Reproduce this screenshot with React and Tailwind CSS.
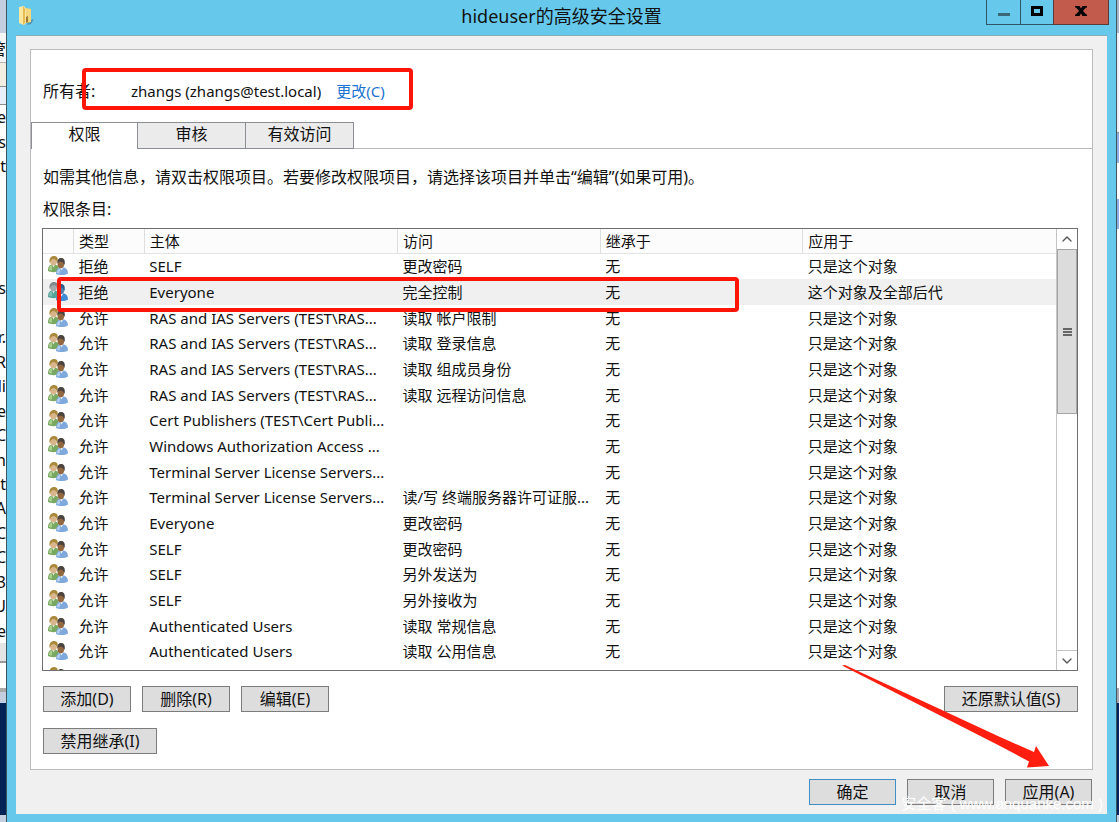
import { useState } from "react"
import clsx from "clsx"
import { ChevronDown, ChevronUp } from "lucide-react"

const tabs = ["权限", "审核", "有效访问"]

const entries = [
  { type: "拒绝", principal: "SELF", access: "更改密码" },
  { type: "拒绝", principal: "Everyone", access: "完全控制", scope: "这个对象及全部后代" },
  { type: "允许", principal: "RAS and IAS Servers (TEST\\RAS...", access: "读取 帐户限制" },
  { type: "允许", principal: "RAS and IAS Servers (TEST\\RAS...", access: "读取 登录信息" },
  { type: "允许", principal: "RAS and IAS Servers (TEST\\RAS...", access: "读取 组成员身份" },
  { type: "允许", principal: "RAS and IAS Servers (TEST\\RAS...", access: "读取 远程访问信息" },
  { type: "允许", principal: "Cert Publishers (TEST\\Cert Publi...", access: "" },
  { type: "允许", principal: "Windows Authorization Access ...", access: "" },
  { type: "允许", principal: "Terminal Server License Servers...", access: "" },
  { type: "允许", principal: "Terminal Server License Servers...", access: "读/写 终端服务器许可证服..." },
  { type: "允许", principal: "Everyone", access: "更改密码" },
  { type: "允许", principal: "SELF", access: "更改密码" },
  { type: "允许", principal: "SELF", access: "另外发送为" },
  { type: "允许", principal: "SELF", access: "另外接收为" },
  { type: "允许", principal: "Authenticated Users", access: "读取 常规信息" },
  { type: "允许", principal: "Authenticated Users", access: "读取 公用信息" },
  { type: "允许", principal: "Authenticated Users", access: "读取 个人信息" },
]

// what shows of the windows behind, one line each
const behindLines = ["e", "as", "t", "", "", "", "", "s", "", "r.", "R", "li", "e", "C", "in", "at", "A", "C", "C", "3", "U", "e"]

function FolderIcon() {
  return (
    <svg className="h-5 w-4" viewBox="0 0 16 20" aria-hidden="true">
      <path d="M9 15l6-2-3 5-4 1z" fill="#3f6f87" opacity=".55" />
      <path d="M5 2l6 1v13l-5 1z" fill="#d9a93c" />
      <path d="M7 2l5 1v13l-5 1z" fill="#f4d67b" />
      <path d="M0 1l5-1 2 3v14l-2 2-5-2z" fill="#fbe7a0" />
      <path d="M4 0l2 3v14l-2 2z" fill="#e5bb54" />
      <path d="M7 11l2-1v6l-2 1z" fill="#9c7a35" />
    </svg>
  )
}

function UsersIcon({ selected }) {
  return (
    <svg className="block h-5 w-5" viewBox="0 0 20 20" aria-hidden="true">
      <path d="M0 15c0-4 1-6 4-6.500h3c3 .5 4 2.500 4 6.500-3 1.500-8 1.500-11 0z" fill={selected ? "#56a39a" : "#79a860"} />
      <path d="M1 14c0-3 1-4.500 3-4.500v5z" fill={selected ? "#7fbdb5" : "#a9cf90"} />
      <path d="M4 8.500l1.500 3 1.500-3z" fill="#e8efe4" />
      <ellipse cx="5.500" cy="5" rx="3.500" ry="4.300" fill={selected ? "#a3a9ab" : "#d9b58c"} />
      <path d="M1.500 7C1 2 3 0 6 0s4.500 2 3.500 6C8.500 4.500 7 3 5.500 3S3 4 1.500 7z" fill={selected ? "#80898c" : "#a98a3c"} />
      <path d="M8 18c0-4 1.500-6 4-6.500h4c2.500.5 4 2.500 4 6-3 2-9 2-12 .5z" fill={selected ? "#3f8ad6" : "#7fa9dc"} />
      <path d="M9 17c0-3 1.500-4.500 3.500-4.500l-1 5z" fill={selected ? "#6aaeea" : "#b3cdee"} />
      <path d="M12 11.500l1.500 3 1.800-3z" fill="#eaf1fa" />
      <ellipse cx="12.800" cy="8" rx="3.300" ry="4.300" fill={selected ? "#4f7fae" : "#94683f"} />
      <path d="M9.300 7.500C9 4 10.500 2 13 2s4.500 1.500 3.600 7C15.500 6.500 14 5.500 12 5.500c-1 0-2 1-2.700 2z" fill={selected ? "#2d5c8c" : "#4a4340"} />
    </svg>
  )
}

function DialogButton({ children, primary, className }) {
  return (
    <button
      type="button"
      className={clsx(
        "flex h-[26px] items-center justify-center whitespace-nowrap border text-base leading-5",
        primary ? "border-[#3f8fc4] bg-[#dddddd]" : "border-[#7c7c7c] bg-[#dddddd]",
        className
      )}
    >
      {children}
    </button>
  )
}

function TitleBar() {
  return (
    <header className="grid h-[35px] grid-cols-[1fr_auto_1fr] items-start">
      <div className="pt-[6px] pl-3">
        <FolderIcon />
      </div>
      <h1 className="pt-1 text-lg leading-6">hideuser的高级安全设置</h1>
      <div className="flex h-[25px] justify-end pr-[7px]">
        <button type="button" aria-label="最小化" className="flex w-[35px] items-center justify-center border border-t-0 border-[#2d5666]">
          <svg className="h-3 w-3" viewBox="0 0 12 12"><path d="M0 7h12v3H0z" fill="#3a6778" /></svg>
        </button>
        <button type="button" aria-label="最大化" className="flex w-8 items-center justify-center border-b border-[#2d5666]">
          <svg className="h-3 w-3" viewBox="0 0 12 12"><path d="M1.500 1.500h9v7h-9z" fill="none" stroke="#000" strokeWidth="3" /></svg>
        </button>
        <button type="button" aria-label="关闭" className="flex w-14 items-center justify-center border border-t-0 border-[#5d3a38] bg-[#c35b4d]">
          <svg className="h-3 w-3" viewBox="0 0 12 12"><path d="M0 0h4.500L6 2.500 7.500 0H12v1.500h-1L8 5l3.300 3.500H12V10H7.500L6 7.500 4.500 10H0V8.500h.8L4 5 1 1.500H0z" fill="#000" /></svg>
        </button>
      </div>
    </header>
  )
}

function Tabs() {
  const [active, setActive] = useState(0)

  return (
    <div role="tablist" className="flex h-[27px]">
      {tabs.map((tab, i) => (
        <button
          key={tab}
          type="button"
          role="tab"
          aria-selected={active === i}
          onClick={() => setActive(i)}
          className={clsx(
            "border-t border-r border-[#8b8e94] pb-1 text-base leading-5",
            i === 0 ? "w-[107px] border-l" : "w-[108px]",
            active === i ? "bg-white" : "border-b bg-[#ebebeb]"
          )}
        >
          {tab}
        </button>
      ))}
      <div className="flex-1 border-b border-[#b9b9b9]"></div>
    </div>
  )
}

function ScrollBar() {
  return (
    <div className="flex w-[21px] shrink-0 flex-col border-l border-[#c4c4c4] bg-white">
      <button type="button" aria-label="向上滚动" className="flex h-5 items-center justify-center">
        <ChevronUp className="h-4 w-4 text-[#555555]" />
      </button>
      <div className="flex h-[165px] flex-col items-center justify-center gap-px border border-[#a6a6a6] bg-[#dcdcdc]">
        <span className="h-[2px] w-[9px] bg-[#666666]"></span>
        <span className="h-[2px] w-[9px] bg-[#666666]"></span>
        <span className="h-[2px] w-[9px] bg-[#666666]"></span>
      </div>
      <div className="flex-1"></div>
      <button type="button" aria-label="向下滚动" className="flex h-5 items-center justify-center border-t border-[#c4c4c4]">
        <ChevronDown className="h-4 w-4 text-[#555555]" />
      </button>
    </div>
  )
}

function EntryTable() {
  return (
    <div className="relative mt-[9px] mr-[14px] ml-[11px]">
      <div className="flex h-[443px] overflow-hidden border border-[#6f6f6f]">
        <div className="min-w-0 flex-1 overflow-hidden">
          <table aria-labelledby="entries-label" className="h-[461px] w-full table-fixed border-collapse text-left text-[15px] leading-5 whitespace-nowrap">
            <colgroup>
              <col className="w-[3%]" />
              <col className="w-[7%]" />
              <col className="w-[25%]" />
              <col className="w-[20%]" />
              <col className="w-[20%]" />
              <col className="w-[25%]" />
            </colgroup>
            <thead>
              <tr className="h-6 border-b border-[#e3e3e3] bg-[#fcfcfc]">
                <th className="border-r border-[#dedede] p-0"></th>
                <th className="border-r border-[#dedede] py-0 pr-0 pl-[5px] font-normal">类型</th>
                <th className="border-r border-[#dedede] py-0 pr-0 pl-[5px] font-normal">主体</th>
                <th className="border-r border-[#dedede] py-0 pr-0 pl-[5px] font-normal">访问</th>
                <th className="border-r border-[#dedede] py-0 pr-0 pl-[5px] font-normal">继承于</th>
                <th className="py-0 pr-0 pl-[5px] font-normal">应用于</th>
              </tr>
            </thead>
            <tbody>
              {entries.map((entry, i) => (
                <tr key={i} className={i === 1 ? "bg-[#f0f0f0]" : "bg-white"}>
                  <td className="py-0 pr-0 pl-[5px]">
                    <UsersIcon selected={i === 1} />
                  </td>
                  <td className="py-0 pr-0 pl-[5px]">{entry.type}</td>
                  <td className="py-0 pr-0 pl-[5px]">{entry.principal}</td>
                  <td className="py-0 pr-0 pl-[5px]">{entry.access}</td>
                  <td className="py-0 pr-0 pl-[5px]">无</td>
                  <td className="py-0 pr-0 pl-[5px]">{entry.scope || "只是这个对象"}</td>
                </tr>
              ))}
            </tbody>
          </table>
        </div>
        <ScrollBar />
      </div>
      {/* mark around the deny Everyone entry */}
      <div className="pointer-events-none absolute top-[49px] left-[15px] h-[35px] w-[682px] rounded-sm border-4 border-[#ff1408]"></div>
    </div>
  )
}

function BehindLeft() {
  return (
    <div className="flex w-[7px] shrink-0 flex-col overflow-hidden border-r border-[#3c5560] bg-white text-base whitespace-nowrap" aria-hidden="true">
      <div className="h-[33px] bg-[#c3cfde]"></div>
      <div className="flex h-[30px] justify-end border-b border-[#b5b5b5] bg-[#f5f5f5] leading-8">管</div>
      <div className="h-6 border-b border-[#8e8e8e] bg-[#f3eee2]"></div>
      <div className="h-[18px] border-b border-[#8e8e8e] bg-[#e8eff8]"></div>
      <div className="flex h-[538px] flex-col">
        {behindLines.map((line, i) => (
          <span key={i} className="flex flex-1 items-center justify-end leading-6">{line}</span>
        ))}
      </div>
      <div className="h-5 border-b-2 border-[#9a9a9a] bg-[#e4e4e4]"></div>
      <div className="h-[25px] bg-white"></div>
      <div className="h-[15px] border-t-4 border-[#a9a9a9] bg-[#c3cfde]"></div>
      <div className="h-28 bg-[#012456]"></div>
      <div className="flex-1 bg-[#c3cfde]"></div>
    </div>
  )
}

function BehindRight() {
  return (
    <div className="flex w-[3px] shrink-0 flex-col border-l border-[#3c5560] bg-white" aria-hidden="true">
      <div className="h-[33px] bg-[#a9b6cc]"></div>
      <div className="h-[100px] border-b border-[#8e8e8e] bg-[#f0f0f0]"></div>
      <div className="h-[30px] bg-[#8fb0dc]"></div>
      <div className="h-9 bg-white"></div>
      <div className="h-[30px] bg-[#8fb0dc]"></div>
      <div className="h-[459px] bg-white"></div>
      <div className="h-[15px] bg-[#a9a9a9]"></div>
      <div className="h-28 bg-[#012456]"></div>
      <div className="flex-1 bg-[#c3cfde]"></div>
    </div>
  )
}

function App() {
  return (
    <div className="relative flex min-h-screen w-full overflow-hidden font-['Noto_Sans','Noto_Sans_CJK_SC',sans-serif] text-[#111111]">
      <BehindLeft />
      <div className="flex min-w-0 flex-1 flex-col bg-[#66c9ec] pb-2">
        <TitleBar />
        <main className="mx-[9px] flex flex-1 flex-col border-t border-[#8dacb9] bg-[#f0f0f0] px-[14px] pt-[13px] pb-[9px]">
          <section className="border border-[#bcbcbc] bg-white pb-[15px]">
            <div className="relative flex h-[72px] items-start pt-[31px] pl-3 leading-5">
              <span className="w-[88px] text-base leading-5">所有者:</span>
              <span className="text-[15px] leading-5">zhangs (zhangs@test.local)</span>
              <a href="#" className="ml-[15px] text-[15px] leading-5 text-[#1a73d1]">更改(C)</a>
              {/* mark around the owner */}
              <div className="pointer-events-none absolute top-[18px] left-[51px] h-[42px] w-[331px] rounded-sm border-4 border-[#ff1408]"></div>
            </div>
            <Tabs />
            <p className="pt-[18px] pl-3 text-base leading-5">
              如需其他信息，请双击权限项目。若要修改权限项目，请选择该项目并单击“编辑”(如果可用)。
            </p>
            <p id="entries-label" className="mt-3 pl-3 text-base leading-5">权限条目:</p>
            <EntryTable />
            <div className="mt-[15px] mr-[14px] ml-3 flex gap-[11px]">
              <DialogButton className="w-[88px]">添加(D)</DialogButton>
              <DialogButton className="w-[88px]">删除(R)</DialogButton>
              <DialogButton className="w-[88px]">编辑(E)</DialogButton>
              <DialogButton className="ml-auto w-[134px]">还原默认值(S)</DialogButton>
            </div>
            <div className="mt-4 mr-[14px] ml-3 flex">
              <DialogButton className="w-[114px]">禁用继承(I)</DialogButton>
            </div>
          </section>
          <div className="mt-[9px] flex justify-end gap-[11px] pr-px">
            <DialogButton primary className="w-[87px]">确定</DialogButton>
            <DialogButton className="w-[87px]">取消</DialogButton>
            <DialogButton className="w-[87px]">应用(A)</DialogButton>
          </div>
        </main>
      </div>
      <BehindRight />

      {/* arrow to the apply button */}
      <svg className="pointer-events-none absolute right-[68px] bottom-[52px] h-[106px] w-[210px]" viewBox="0 0 210 106" aria-hidden="true">
        <path d="M1 1.500l3-.5L159 73l34 15 2-6 13 20-22 1.500 2-6L159 82z" fill="#ff1e10" />
      </svg>
      <span className="pointer-events-none absolute right-4 bottom-2 font-['Liberation_Sans','Noto_Sans_CJK_SC',sans-serif] text-[15px] leading-5 text-white">
        安全客 ( www.anquanke.com )
      </span>
    </div>
  )
}

export default App
